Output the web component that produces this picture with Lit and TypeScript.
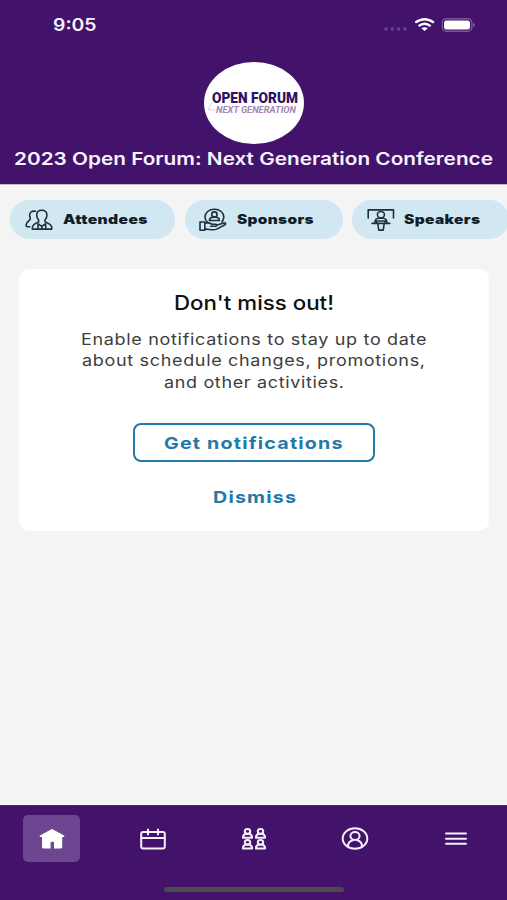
import { LitElement, html, css, svg } from "lit";
import { customElement, property } from "lit/decorators.js";

/** One line of text stretched horizontally so that it fills a given width. */
@customElement("wide-text")
class WideText extends LitElement {
  @property({ type: Number }) width = 100;
  @property() text = "";
  static styles = css`
    :host { display: block; flex: none; white-space: nowrap; text-align: left; }
    .line { display: inline-block; transform-origin: 0 50%; vertical-align: top; }
  `;
  render() {
    return html`<span class="line">${this.text}</span>`;
  }
  updated() {
    const line = this.renderRoot.querySelector(".line") as HTMLElement;
    this.style.width = `${this.width}px`;
    line.style.transform = "none";
    const spacing = parseFloat(getComputedStyle(line).letterSpacing) || 0;
    const natural = line.getBoundingClientRect().width - spacing;
    line.style.transform = `scaleX(${this.width / natural})`;
  }
}

const attendees = html`<svg class="ic" width="28" height="22" viewBox="0 0 28 22">
  <path d="M13.400 10.800c-1.200-1.200-1.700-2.600-1.700-4.800C11.700 3 13.900 1.200 16.800 1.200S21.900 3 21.900 6c0 2.200-.5 3.600-1.700 4.800-.5.700-.4 1.900.3 2.300 2 1.200 5.100 1.400 6 4.200.2.800.3 1.800.3 2.800H7.300c0-1 .1-2 .4-2.800.9-2.800 3.700-3 5.500-4.200.6-.4.700-1.600.2-2.300z"/>
  <path d="M10.500 2.300C7 1.500 4.500 3.300 4.600 6.200c0 1.300.7 2 .7 3 0 1.200-.6 1.900-1.500 2.700-1.600 1.100-2.700 1.800-2.700 4.200 0 1.100.5 1.700 1.700 1.700h1.900M13 15v5M20.700 15v5M13.300 15l3.500 2.300 3.700-2.300M16.800 17.300V20"/>
</svg>`;

const sponsors = html`<svg class="ic" width="28" height="24" viewBox="0 0 28 24">
  <path d="M8.600 14.200C6.800 12.800 6 11 6 9c0-4.300 4-7.800 9.400-7.800S24.800 4.700 24.800 9c0 2-.7 3.600-2 5"/>
  <ellipse cx="15.400" cy="6.500" rx="2.700" ry="2.600"/>
  <path d="M10.400 12.500c0-2 1-3 3.200-3.300h3.600c2.200.3 3.200 1.300 3.200 3.300z"/>
  <path d="M1 14h4.800v8.200H1zM5.800 15.200c3.400-.9 5.500 0 7.200 1h3.600c1.600 0 1.600 2 0 2.100h-5M17.500 17.300l7.200-2.300c1.800-.4 2.700.9 1.300 1.700l-8.300 4.400c-3.700 1.900-8-.5-11.900.1"/>
</svg>`;

const speakers = html`<svg class="ic" width="28" height="24" viewBox="0 0 28 24">
  <path d="M1.200 10V1.900h25.300V10"/>
  <ellipse cx="13.900" cy="6.700" rx="3.500" ry="3.200"/>
  <path d="M7.800 15.200c0-3.200 1.200-4.800 4-4.900h4.200c2.800.1 4 1.700 4 4.900M5 15.400h17.800M9.700 13h8.400v2.400M9.700 13v2.400M10.800 15.600l1 6.500h4.400l1-6.500"/>
</svg>`;

const person = (x: number, y: number) => svg`
  <ellipse cx=${x} cy=${y + 3} rx="2.700" ry="2.400"/>
  <path d="M${x - 4.600} ${y + 9.200}c0-2.300 1.100-3.600 3.100-4h3c2 .4 3.100 1.700 3.100 4z"/>`;

@customElement("app-root")
class AppRoot extends LitElement {
  static styles = css`
    :host {
      display: flex; flex-direction: column; width: 507px; height: 900px; overflow: hidden;
      box-sizing: border-box; background: #f4f4f4; font-family: Inter, "Liberation Sans", sans-serif;
    }
    header {
      flex: none; height: 185px; background: #43136b; color: #f8f2fc;
      display: flex; flex-direction: column; align-items: center;
      border-bottom: 1px solid #c5bccb; box-sizing: border-box;
    }
    .status {
      align-self: stretch; height: 49px; flex: none; display: flex; align-items: center;
      padding: 0 32px 0 53px; box-sizing: border-box;
    }
    .time { font-size: 17px; font-weight: 600; line-height: 20px; margin-right: auto; }
    .signals { display: block; }
    .logo {
      width: 100px; height: 82px; margin-top: 13px; border-radius: 50%; background: #fff; flex: none;
      display: flex; flex-direction: column; align-items: center; position: relative;
      font-family: Roboto, "Liberation Sans", sans-serif;
    }
    .open { margin: 29px 0 0 3px; font-size: 14.300px; line-height: 14px; font-weight: 900; color: #2e1266; }
    .next { margin: 0 0 0 4px; font-size: 9.300px; line-height: 9px; font-weight: 700; font-style: italic; color: #a685b5; }
    .swoosh { position: absolute; left: 3px; top: 39px; }
    .title { margin-top: 4px; font-size: 17.500px; line-height: 21px; font-weight: 600; }
    .pills { flex: none; display: flex; gap: 9.300px; padding: 15px 0 0 10.300px; }
    .pill {
      flex: none; display: flex; align-items: center; box-sizing: border-box; height: 39px;
      border-radius: 20px; background: #d1e7f1; color: #0f1e29; padding-left: 14.700px;
    }
    .p0 { width: 165.200px; } .p1 { width: 157.800px; } .p2 { width: 157px; }
    .pill .ic { fill: none; stroke: #1c303d; stroke-width: 1.600; stroke-linejoin: round; stroke-linecap: round; flex: none; margin-right: 9.800px; }
    .pill wide-text { font-size: 12.800px; font-weight: 900; line-height: 16px; letter-spacing: .3px; }
    .card {
      flex: none; margin: 30px 18px 0 19px; height: 262px; box-sizing: border-box; background: #fff;
      border-radius: 10px; display: flex; flex-direction: column; align-items: center; padding-top: 22px;
    }
    .head { font-size: 20px; font-weight: 500; line-height: 24px; color: #101010; margin-right: 1px; }
    .body {
      margin: 14px 1px 0 0; display: flex; flex-direction: column; align-items: center;
      font-size: 15.800px; line-height: 21.400px; letter-spacing: .6px; color: #3d3d3d;
    }
    .get {
      margin-top: 30px; width: 242px; height: 39px; box-sizing: border-box; border: 2px solid #2479a6;
      border-radius: 8px; background: none; padding: 0 1px 0 0; display: flex; align-items: center; justify-content: center;
    }
    .action { font-family: Inter, sans-serif; font-size: 16.500px; font-weight: 700; line-height: 20px; letter-spacing: 1px; color: #2479a6; }
    .dismiss { margin-top: 25px; background: none; border: 0; padding: 0; }
    nav {
      flex: none; margin-top: auto; height: 95px; box-sizing: border-box; background: #43136b; border-top: 1px solid #4d2073;
      box-shadow: 0 -1px 0 #fbfbfb; display: flex; flex-direction: column; align-items: center;
    }
    .tabs {
      width: 507px; height: 65px; padding-left: 1px; box-sizing: border-box;
      display: grid; grid-template-columns: repeat(5, 1fr); align-items: center; justify-items: center;
    }
    .tab { width: 57px; height: 47px; border-radius: 5px; display: flex; align-items: center; justify-content: center; }
    .on { background: #6c4690; }
    .tab svg { fill: none; stroke: #f5effa; stroke-width: 2; stroke-linejoin: round; stroke-linecap: round; }
    .tab .solid { fill: #fff; stroke: none; }
    .indicator { width: 180px; height: 5px; margin-top: 16px; border-radius: 3px; background: #4c4a4c; }
  `;

  render() {
    return html`
      <header>
        <div class="status">
          <wide-text class="time" width="43.500" text="9:05"></wide-text>
          <svg class="signals" width="92" height="18" viewBox="0 0 92 18">
            <g fill="#6b4591">
              <circle cx="3" cy="13" r="1.700"/><circle cx="9.300" cy="13" r="1.700"/><circle cx="15.600" cy="13" r="1.700"/><circle cx="22" cy="13" r="1.700"/>
            </g>
            <g fill="none" stroke="#fff" stroke-width="2.300">
              <path d="M32.300 6.700Q41.600-.3 50.900 6.700"/><path d="M35.600 10.100Q41.600 5.500 47.600 10.100"/>
            </g>
            <path d="M38.300 12.300Q41.600 10 44.900 12.300L41.600 15z" fill="#fff"/>
            <rect x="59.300" y="2.700" width="29.500" height="12.600" rx="4" fill="none" stroke="#7a589a" stroke-width="1.400"/>
            <rect x="61" y="4.400" width="26" height="9.200" rx="2.500" fill="#fff"/>
            <path d="M90 7q1.800.6 1.800 2t-1.800 2z" fill="#8263a0"/>
          </svg>
        </div>
        <div class="logo">
          <svg class="swoosh" width="10" height="10" viewBox="0 0 10 10"><path d="M5.500 1L1 8.500 8 9.300" fill="none" stroke="#d8d3dc"/></svg>
          <wide-text class="open" width="86" text="OPEN FORUM"></wide-text>
          <wide-text class="next" width="80" text="NEXT GENERATION"></wide-text>
        </div>
        <wide-text class="title" width="479" text="2023 Open Forum: Next Generation Conference"></wide-text>
      </header>
      <div class="pills">
        <div class="pill p0">${attendees}<wide-text width="84.500" text="Attendees"></wide-text></div>
        <div class="pill p1">${sponsors}<wide-text width="76.500" text="Sponsors"></wide-text></div>
        <div class="pill p2">${speakers}<wide-text width="76" text="Speakers"></wide-text></div>
      </div>
      <section class="card">
        <wide-text class="head" width="160" text="Don't miss out!"></wide-text>
        <div class="body">
          <wide-text width="345.500" text="Enable notifications to stay up to date"></wide-text>
          <wide-text width="343" text="about schedule changes, promotions,"></wide-text>
          <wide-text width="180" text="and other activities."></wide-text>
        </div>
        <button class="get"><wide-text class="action" width="178.500" text="Get notifications"></wide-text></button>
        <button class="dismiss"><wide-text class="action" width="83" text="Dismiss"></wide-text></button>
      </section>
      <nav>
        <div class="tabs">
          <div class="tab on"><svg class="solid" width="26" height="20" viewBox="0 0 26 20">
            <path d="M13 0L21 4.200 25.300 6.700Q25.600 8 24.600 8H23.200V18Q23.200 19.600 21.500 19.600H15V13.500Q15 12.700 13.900 12.700H12.600Q11.600 12.700 11.600 13.500V19.600H4.700Q3 19.600 3 18V8H1.400Q.4 8 .7 6.700L5 4.200Z"/></svg></div>
          <div class="tab"><svg width="26" height="22" viewBox="0 0 26 22">
            <rect x="1.200" y="4" width="23.600" height="16.600" rx="2"/><path d="M1.200 10h23.600M8 1.500v5M18 1.500v5"/></svg></div>
          <div class="tab"><svg width="26" height="22" viewBox="0 0 26 22">
            ${person(6.500, 0.500)}${person(19.500, 0.500)}${person(6.500, 11.300)}${person(19.500, 11.300)}</svg></div>
          <div class="tab"><svg width="28" height="23" viewBox="0 0 28 23">
            <ellipse cx="14" cy="11.500" rx="12.300" ry="10.300"/><ellipse cx="14" cy="9" rx="4.600" ry="3.900"/>
            <path d="M7 19.500c0-3.800 1.900-5.600 4.800-6.300M21 19.500c0-3.800-1.900-5.600-4.800-6.300"/></svg></div>
          <div class="tab"><svg width="24" height="16" viewBox="0 0 24 16">
            <path d="M2 2.600h20M2 7.700h20M2 12.800h20"/></svg></div>
        </div>
        <div class="indicator"></div>
      </nav>
    `;
  }
}
